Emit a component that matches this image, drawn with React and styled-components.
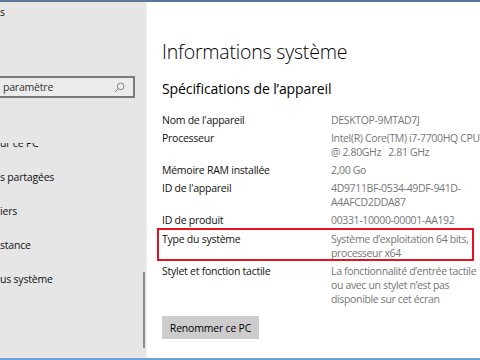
import React from "react";
import styled, { createGlobalStyle } from "styled-components";

const GlobalStyle = createGlobalStyle`
  html, body {
    margin: 0;
    padding: 0;
    background: #ffffff;
  }
  body {
    font-family: "Open Sans", "Noto Sans", sans-serif;
    color: #000;
  }
`;

const specs = [
  { label: "Nom de l'appareil", value: ["DESKTOP-9MTAD7J"] },
  {
    label: "Processeur",
    value: ["Intel(R) Core(TM) i7-7700HQ CPU", "@ 2.80GHz   2.81 GHz"],
  },
  { label: "Mémoire RAM installée", value: ["2,00 Go"] },
  { label: "ID de l'appareil", value: ["4D9711BF-0534-49DF-941D-", "A4AFCD2DDA87"] },
  { label: "ID de produit", value: ["00331-10000-00001-AA192"] },
  {
    label: "Type du système",
    value: ["Système d’exploitation 64 bits,", "processeur x64"],
    highlight: true,
  },
  {
    label: "Stylet et fonction tactile",
    value: [
      "La fonctionnalité d’entrée tactile",
      "ou avec un stylet n’est pas",
      "disponible sur cet écran",
    ],
  },
];

const navItems = [
  { text: "ur ce PC", clipped: true },
  { text: "s partagées" },
  { text: "iers" },
  { text: "stance" },
  { text: "us système" },
];

const Window = styled.div`
  width: 480px;
  height: 360px;
  display: flex;
  flex-direction: column;
  overflow: hidden;
`;

const TopLine = styled.div`
  height: 2px;
  background: #5b7898;
`;

const BottomLine = styled.div`
  height: 2px;
  background: #6aa3da;
`;

const Main = styled.div`
  flex: 1;
  display: flex;
  min-height: 0;
`;

const Sidebar = styled.aside`
  position: relative;
  flex: 0 0 146px;
  background: #e6e6e6;
  display: flex;
  flex-direction: column;
  overflow: hidden;
  font-size: 10.5px;
  letter-spacing: -0.2px;
`;

const SideTitle = styled.div`
  margin-top: 3px;
  line-height: 14px;
  color: #111;
`;

const SearchBox = styled.div`
  margin: 57px 0 0 -20px;
  width: 155px;
  height: 22px;
  box-sizing: border-box;
  border: 2px solid #7a7a7a;
  background: #ececec;
  display: flex;
  align-items: center;
  justify-content: space-between;
  padding: 0 8px 0 21px;
  color: #333;
`;

const NavList = styled.nav`
  display: flex;
  flex-direction: column;
  gap: 20px;
  margin-top: 38px;
`;

const NavItem = styled.div`
  line-height: 14px;
  color: #111;
  white-space: nowrap;
  clip-path: ${(p) => (p.$clipped ? "inset(50% 0 0 0)" : "none")};
`;

const ScrollThumb = styled.div`
  position: absolute;
  left: 143px;
  top: 270px;
  width: 2px;
  height: 76px;
  background: #8a8a8a;
`;

const Content = styled.main`
  flex: 1;
  min-width: 0;
  border-left: 1px solid #f2f2f2;
  padding: 0 0 0 15px;
  display: flex;
  flex-direction: column;
`;

const PageTitle = styled.h1`
  margin: 36px 0 0;
  font-size: 19.5px;
  font-weight: 300;
  line-height: 28px;
  color: #000;
  letter-spacing: -0.2px;
`;

const SectionTitle = styled.h2`
  margin: 13px 0 0;
  font-size: 14px;
  font-weight: 400;
  line-height: 20px;
  color: #000;
  letter-spacing: -0.1px;
`;

const SpecList = styled.div`
  margin-top: 14px;
  display: flex;
  flex-direction: column;
  gap: 4px;
`;

const SpecRow = styled.div`
  position: relative;
  display: grid;
  grid-template-columns: 169px 1fr;
  font-size: 10.5px;
  letter-spacing: -0.25px;
  line-height: 14px;
  margin-top: ${(p) => (p.$highlight ? "1px" : "0")};

  &::after {
    content: "";
    display: ${(p) => (p.$highlight ? "block" : "none")};
    position: absolute;
    left: -5px;
    top: -4px;
    width: 317px;
    height: 33px;
    box-sizing: border-box;
    border: 2px solid #e81123;
  }
`;

const Label = styled.div`
  color: #111;
  white-space: nowrap;
`;

const Value = styled.div`
  color: #767676;
  white-space: pre;
  letter-spacing: -0.35px;
`;

const RenameButton = styled.button`
  margin-top: 10px;
  align-self: flex-start;
  width: 97px;
  height: 23px;
  border: none;
  background: #cccccc;
  font-family: inherit;
  font-size: 10.5px;
  letter-spacing: -0.2px;
  color: #000;
  padding: 0;
`;

function SearchIcon() {
  return (
    <svg width="11" height="11" viewBox="0 0 12 12" fill="none" stroke="#7a7a7a" strokeWidth="1">
      <circle cx="7.3" cy="4.7" r="3.6" />
      <path d="M4.7 7.3 L1 11" />
    </svg>
  );
}

export default function App() {
  return (
    <>
      <GlobalStyle />
      <Window>
        <TopLine />
        <Main>
          <Sidebar>
            <SideTitle>s</SideTitle>
            <SearchBox>
              <span>paramètre</span>
              <SearchIcon />
            </SearchBox>
            <NavList>
              {navItems.map((n) => (
                <NavItem key={n.text} $clipped={n.clipped}>
                  {n.text}
                </NavItem>
              ))}
            </NavList>
            <ScrollThumb />
          </Sidebar>
          <Content>
            <PageTitle>Informations système</PageTitle>
            <SectionTitle>Spécifications de l’appareil</SectionTitle>
            <SpecList>
              {specs.map((s) => (
                <SpecRow key={s.label} $highlight={s.highlight}>
                  <Label>{s.label}</Label>
                  <Value>{s.value.join("\n")}</Value>
                </SpecRow>
              ))}
            </SpecList>
            <RenameButton>Renommer ce PC</RenameButton>
          </Content>
        </Main>
        <BottomLine />
      </Window>
    </>
  );
}
